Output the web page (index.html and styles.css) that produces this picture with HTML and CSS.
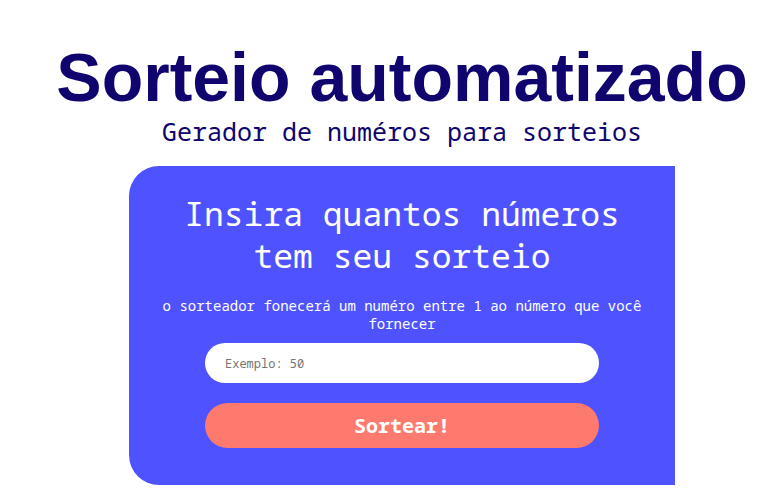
FILE: index.html
```html
<!DOCTYPE html>
<html lang="pt-BR">
<head>
<meta charset="utf-8">
<title>Sorteio automatizado</title>
<link rel="stylesheet" href="styles.css">
</head>
<body>
<main class="page">
  <header class="header">
    <h1 class="title">Sorteio automatizado</h1>
    <p class="subtitle">Gerador de numéros para sorteios</p>
  </header>
  <form class="card">
    <h2 class="card-title">Insira quantos números tem seu sorteio</h2>
    <label class="hint" for="total">o sorteador fonecerá um numéro entre 1 ao número que você fornecer</label>
    <input class="field" id="total" type="text" placeholder="Exemplo: 50">
    <button class="draw" type="button">Sortear!</button>
  </form>
</main>
</body>
</html>
```
FILE: styles.css
```css
* {
  box-sizing: border-box;
  margin: 0;
}

body {
  background: #fff;
  color: #10056e;
  font-family: Consolas, "Noto Sans Mono", "DejaVu Sans Mono", monospace;
}

.page {
  display: flex;
  flex-direction: column;
  align-items: center;
  padding: 37px 0 16px 45px;
}

.header {
  text-align: center;
}

.title {
  font: bold 68px/80px "Liberation Sans", Arial, sans-serif;
  white-space: nowrap;
}

.subtitle {
  font-size: 25px;
  line-height: 28px;
}

.card {
  display: flex;
  flex-direction: column;
  align-items: center;
  width: 546px;
  max-width: 100%;
  margin-top: 21px;
  padding: 27px 32px 37px;
  border-radius: 30px 0 0 30px;
  background: #4f53ff;
  color: #fff;
  text-align: center;
}

.card-title {
  max-width: 474px;
  font-size: 33px;
  font-weight: normal;
  line-height: 42px;
}

.hint {
  margin-top: 20px;
  font-size: 14px;
  line-height: 18px;
}

.field,
.draw {
  width: 394px;
  max-width: 100%;
  border: 0;
  border-radius: 24px;
  font-family: inherit;
}

.field {
  height: 40px;
  margin-top: 10px;
  padding: 0 20px;
  background: #fff;
  font-size: 12px;
}

.field::placeholder {
  color: #757575;
}

.draw {
  height: 45px;
  margin-top: 20px;
  background: #ff7a6e;
  color: #fff;
  font-size: 20px;
  font-weight: bold;
}
```
